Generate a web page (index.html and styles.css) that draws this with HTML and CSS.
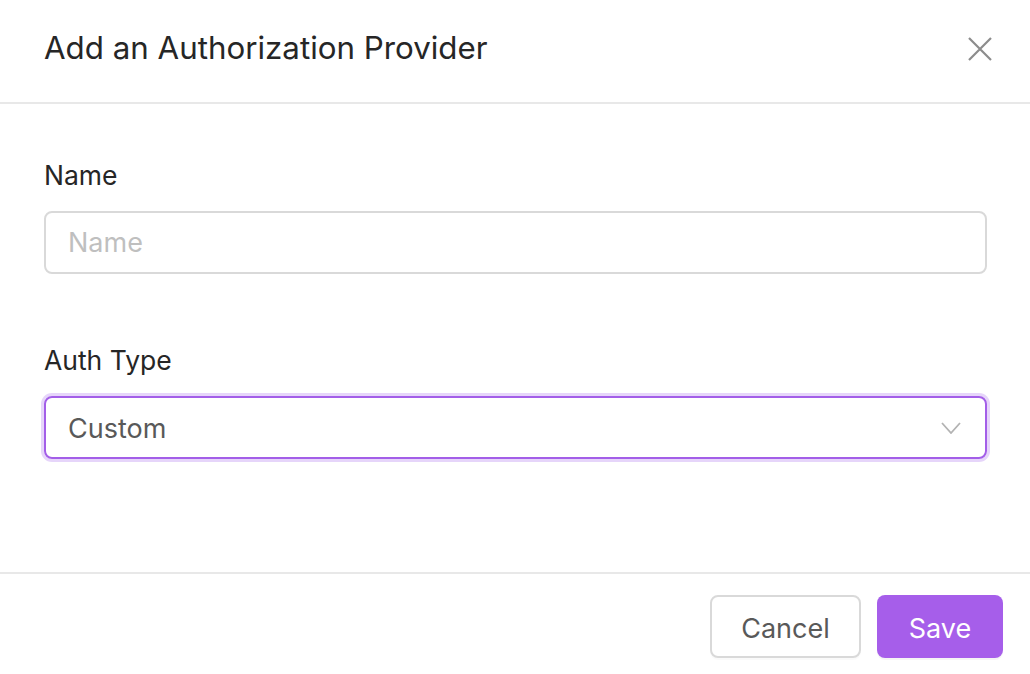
FILE: index.html
```html
<!DOCTYPE html>
<html>
<head>
<meta charset="utf-8">
<link rel="stylesheet" href="styles.css">
</head>
<body>
<div class="modal">
  <div class="header">
    <div class="title">Add an Authorization Provider</div>
    <button class="close" aria-label="Close">
      <svg width="24" height="24" viewBox="0 0 24 24"><path d="M1 1 L23 23 M23 1 L1 23" stroke="#8c8c8c" stroke-width="2.2" fill="none"/></svg>
    </button>
  </div>
  <div class="body">
    <div class="field">
      <label class="label">Name</label>
      <input class="input" placeholder="Name">
    </div>
    <div class="field second">
      <label class="label">Auth Type</label>
      <div class="select">
        <span class="select-value">Custom</span>
        <svg class="chevron" width="20" height="12" viewBox="0 0 20 12"><path d="M1 1 L10 11 L19 1" stroke="#b3b3b3" stroke-width="1.8" fill="none"/></svg>
      </div>
    </div>
  </div>
  <div class="footer">
    <button class="btn cancel">Cancel</button>
    <button class="btn save">Save</button>
  </div>
</div>
</body>
</html>
```
FILE: styles.css
```css
* { box-sizing: border-box; }
html, body { margin: 0; padding: 0; background: #fff; }
body { font-family: Inter, "Liberation Sans", Arial, sans-serif; color: #262626; }
.modal { width: 1030px; height: 674px; display: flex; flex-direction: column; }
.header {
  height: 104px;
  border-bottom: 2px solid #e8e8e8;
  display: flex; align-items: center; justify-content: space-between;
  padding: 0 38px 0 44px;
}
.title { font-size: 31.3px; color: #262626; margin-top: -6px; }
.close { background: none; border: 0; padding: 0; width: 24px; height: 24px; margin-top: -4px; cursor: pointer; }
.close svg { display: block; }
.body { flex: 1; padding: 57px 43px 0 44px; }
.field { display: flex; flex-direction: column; }
.second { margin-top: 72px; }
.label { font-size: 26.5px; line-height: 28px; color: #262626; margin-bottom: 22px; }
.input {
  height: 63px; width: 943px;
  border: 2px solid #d9d9d9; border-radius: 8px;
  padding: 0 22px;
  font-family: Inter, "Liberation Sans", Arial, sans-serif;
  font-size: 27px; color: #262626; outline: none;
}
.input::placeholder { color: #bfbfbf; }
.select {
  height: 63px; width: 943px;
  border: 2px solid #a35ee8; border-radius: 8px;
  box-shadow: 0 0 0 3px #e6d5fa;
  padding: 1px 24px 0 22px;
  display: flex; align-items: center; justify-content: space-between;
}
.select-value { font-size: 27px; color: #595959; }
.chevron { display: block; }
.footer {
  height: 102px;
  border-top: 2px solid #e8e8e8;
  display: flex; justify-content: flex-end; align-items: flex-start;
  gap: 16px;
  padding: 21px 27px 0 0;
}
.btn {
  height: 63px; border-radius: 8px;
  font-family: Inter, "Liberation Sans", Arial, sans-serif;
  font-size: 27px; cursor: pointer;
  padding: 3px 0 0;
}
.cancel {
  width: 151px; background: #fff; color: #595959;
  border: 2px solid #d9d9d9;
  box-shadow: 0 2px 0 rgba(0,0,0,0.02);
}
.save {
  width: 126px; background: #a65eea; color: #fff;
  border: 0;
  box-shadow: 0 2px 0 rgba(0,0,0,0.04);
}
```
